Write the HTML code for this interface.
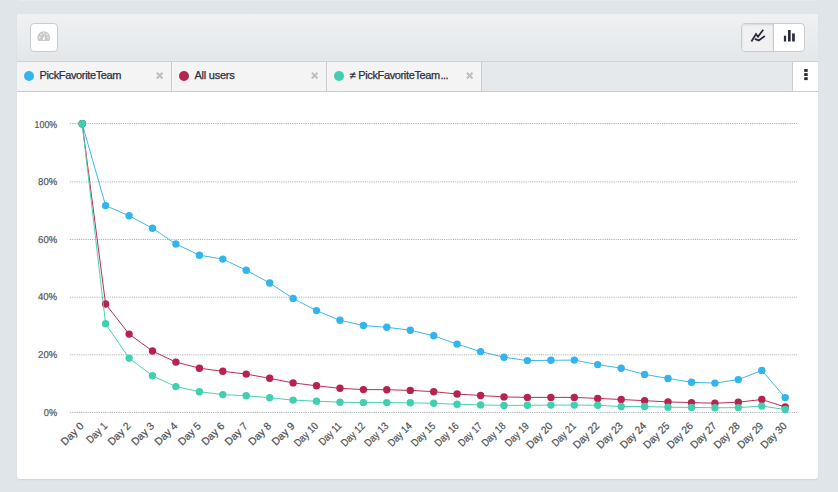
<!DOCTYPE html>
<html><head><meta charset="utf-8">
<style>
html,body{margin:0;padding:0;}
body{width:838px;height:492px;overflow:hidden;background:#e0e5e9;font-family:"Liberation Sans",sans-serif;position:relative;}
.topstrip{position:absolute;left:20px;top:0;width:798px;height:1px;background:#e6eaed;}
.panel{position:absolute;left:17px;top:14px;width:801px;height:465px;background:#fff;border-radius:3px;overflow:hidden;box-shadow:0 1px 1.5px rgba(0,0,0,0.08);}
.head{position:absolute;left:0;top:0;width:801px;height:47px;background:linear-gradient(#eff1f3,#e4e7ea);border-bottom:1px solid #cfd2d5;}
.btn{position:absolute;box-sizing:border-box;background:#fff;border:1px solid #c9cbcd;border-radius:4px;}
.tabs{position:absolute;left:0;top:48px;width:801px;height:29px;background:#e6e9ec;border-bottom:1px solid #c9ccd0;}
.tab{position:absolute;top:0;height:29px;width:154px;background:#f4f4f5;border-right:1px solid #c9ccd0;}
.dot{position:absolute;left:7px;top:9px;width:10px;height:10px;border-radius:50%;}
.tab span{position:absolute;left:22.5px;top:7px;font-size:11px;line-height:13px;color:#2b2d3c;white-space:nowrap;letter-spacing:-0.36px;-webkit-text-stroke:0.25px #2b2d3c;}
.tab svg{position:absolute;left:138.9px;top:9.8px;}
.kebab{position:absolute;left:775px;top:0;width:25px;height:29px;background:#fff;border-left:1px solid #c9ccd0;}
.kebab i{position:absolute;left:11.5px;width:3px;height:3px;background:#2b2d3c;}
.chart{position:absolute;left:0;top:0;}
.yl{text-rendering:geometricPrecision;font-size:10px;fill:#505358;stroke:#505358;stroke-width:0.2px;font-family:"Liberation Sans",sans-serif;}
.xl{text-rendering:geometricPrecision;font-size:10.5px;fill:#4b4e54;stroke:#4b4e54;stroke-width:0.2px;font-family:"Liberation Sans",sans-serif;}
</style></head><body>
<div class="topstrip"></div>
<div class="panel">
  <div class="head"></div>
  <div class="btn" style="left:13px;top:9px;width:28px;height:29px;">
    <svg width="14" height="10.5" viewBox="0 0 14 10.5" style="position:absolute;left:6px;top:7px"><path d="M1.9 10 Q1.2 10 0.9 9.3 A6.4 6.4 0 1 1 12.5 9.3 Q12.2 10 11.5 10 Z" fill="#c9cacc"/><path d="M7.6 4.1 L7.5 8 L6 8 Z" fill="#fff"/><circle cx="6.75" cy="7.9" r="1" fill="#fff"/><circle cx="2.7" cy="6.5" r="0.75" fill="#fff"/><circle cx="4" cy="3.5" r="0.75" fill="#fff"/><circle cx="6.75" cy="2.2" r="0.75" fill="#fff"/><circle cx="9.85" cy="3.5" r="0.75" fill="#fff"/><circle cx="11" cy="6.5" r="0.75" fill="#fff"/></svg>
  </div>
  <div class="btn" style="left:724px;top:9px;width:64px;height:29px;overflow:hidden;">
    <div style="position:absolute;left:0;top:0;width:31px;height:27px;background:#f1f1f3;border-right:1px solid #c9cbcd;box-shadow:inset 0 1px 2px rgba(0,0,0,0.12);"></div>
    <svg width="62" height="27" viewBox="742 24 62 27" style="position:absolute;left:0;top:0">
      <polyline points="751.4,41.4 756,34 758,36.7 763.2,29.8" fill="none" stroke="#2b2d3c" stroke-width="1.8"/>
      <polyline points="754.8,38.8 758.7,40.4 764.8,36" fill="none" stroke="#2b2d3c" stroke-width="1.8"/>
      <rect x="783.9" y="35.7" width="2.2" height="5.8" fill="#2b2d3c"/>
      <rect x="788" y="30" width="2.7" height="11.5" fill="#2b2d3c"/>
      <rect x="792.1" y="33.4" width="2.7" height="8.1" fill="#2b2d3c"/>
    </svg>
  </div>
  <div class="tabs">
    <div class="tab" style="left:0"><div class="dot" style="background:#32b4ec"></div><span>PickFavoriteTeam</span><svg width="7.4" height="7.4" viewBox="0 0 8 8"><path d="M0.9 0.9 L7.1 7.1 M7.1 0.9 L0.9 7.1" stroke="#bcc0c4" stroke-width="2.2"/></svg></div>
    <div class="tab" style="left:155px"><div class="dot" style="background:#b8224e"></div><span style="letter-spacing:-0.24px">All users</span><svg width="7.4" height="7.4" viewBox="0 0 8 8"><path d="M0.9 0.9 L7.1 7.1 M7.1 0.9 L0.9 7.1" stroke="#bcc0c4" stroke-width="2.2"/></svg></div>
    <div class="tab" style="left:310px"><div class="dot" style="background:#40cfb0"></div><span>≠</span><span style="left:31.2px">PickFavoriteTeam</span><span style="left:113.4px;letter-spacing:-0.5px">...</span><svg width="7.4" height="7.4" viewBox="0 0 8 8"><path d="M0.9 0.9 L7.1 7.1 M7.1 0.9 L0.9 7.1" stroke="#bcc0c4" stroke-width="2.2"/></svg></div>
    <div class="kebab"><svg width="25" height="29" viewBox="793 62 25 29" style="position:absolute;left:0;top:0"><rect x="804.2" y="69" width="3.5" height="2.9" fill="#2b2d3c"/><rect x="804.2" y="73.1" width="3.5" height="2.9" fill="#2b2d3c"/><rect x="804.2" y="77.2" width="3.5" height="2.9" fill="#2b2d3c"/></svg></div>
  </div>
</div>
<svg class="chart" width="838" height="492" viewBox="0 0 838 492">
<line x1="70.1" y1="123.5" x2="797" y2="123.5" stroke="#a9adb2" stroke-width="1" stroke-dasharray="1.1 1.1"/>
<line x1="70.1" y1="181.9" x2="797" y2="181.9" stroke="#a9adb2" stroke-width="1" stroke-dasharray="1.1 1.1"/>
<line x1="70.1" y1="239.5" x2="797" y2="239.5" stroke="#a9adb2" stroke-width="1" stroke-dasharray="1.1 1.1"/>
<line x1="70.1" y1="297.2" x2="797" y2="297.2" stroke="#a9adb2" stroke-width="1" stroke-dasharray="1.1 1.1"/>
<line x1="70.1" y1="354.8" x2="797" y2="354.8" stroke="#a9adb2" stroke-width="1" stroke-dasharray="1.1 1.1"/>
<line x1="70.1" y1="412.5" x2="797" y2="412.5" stroke="#a9adb2" stroke-width="1" stroke-dasharray="1.1 1.1"/>
<text x="34.6" y="128.1" textLength="22.6" lengthAdjust="spacingAndGlyphs" class="yl">100%</text>
<text x="38.1" y="185.0" textLength="19.1" lengthAdjust="spacingAndGlyphs" class="yl">80%</text>
<text x="38.1" y="243.0" textLength="19.1" lengthAdjust="spacingAndGlyphs" class="yl">60%</text>
<text x="37.9" y="300.0" textLength="19.3" lengthAdjust="spacingAndGlyphs" class="yl">40%</text>
<text x="38.1" y="358.0" textLength="19.1" lengthAdjust="spacingAndGlyphs" class="yl">20%</text>
<text x="43.8" y="416.1" textLength="13.4" lengthAdjust="spacingAndGlyphs" class="yl">0%</text>
<text transform="translate(84.5 426.6) rotate(-45)" text-anchor="end" class="xl">Day 0</text>
<text transform="translate(107.9 426.6) rotate(-45)" text-anchor="end" class="xl" textLength="24.5" lengthAdjust="spacingAndGlyphs">Day 1</text>
<text transform="translate(131.4 426.6) rotate(-45)" text-anchor="end" class="xl">Day 2</text>
<text transform="translate(154.8 426.6) rotate(-45)" text-anchor="end" class="xl">Day 3</text>
<text transform="translate(178.2 426.6) rotate(-45)" text-anchor="end" class="xl">Day 4</text>
<text transform="translate(201.7 426.6) rotate(-45)" text-anchor="end" class="xl">Day 5</text>
<text transform="translate(225.1 426.6) rotate(-45)" text-anchor="end" class="xl">Day 6</text>
<text transform="translate(248.5 426.6) rotate(-45)" text-anchor="end" class="xl">Day 7</text>
<text transform="translate(272.0 426.6) rotate(-45)" text-anchor="end" class="xl">Day 8</text>
<text transform="translate(295.4 426.6) rotate(-45)" text-anchor="end" class="xl">Day 9</text>
<text transform="translate(318.8 426.6) rotate(-45)" text-anchor="end" class="xl" textLength="29.2" lengthAdjust="spacingAndGlyphs">Day 10</text>
<text transform="translate(342.3 426.6) rotate(-45)" text-anchor="end" class="xl" textLength="27.3" lengthAdjust="spacingAndGlyphs">Day 11</text>
<text transform="translate(365.7 426.6) rotate(-45)" text-anchor="end" class="xl" textLength="29.2" lengthAdjust="spacingAndGlyphs">Day 12</text>
<text transform="translate(389.1 426.6) rotate(-45)" text-anchor="end" class="xl" textLength="29.2" lengthAdjust="spacingAndGlyphs">Day 13</text>
<text transform="translate(412.6 426.6) rotate(-45)" text-anchor="end" class="xl" textLength="29.2" lengthAdjust="spacingAndGlyphs">Day 14</text>
<text transform="translate(436.0 426.6) rotate(-45)" text-anchor="end" class="xl" textLength="29.2" lengthAdjust="spacingAndGlyphs">Day 15</text>
<text transform="translate(459.4 426.6) rotate(-45)" text-anchor="end" class="xl" textLength="29.2" lengthAdjust="spacingAndGlyphs">Day 16</text>
<text transform="translate(482.9 426.6) rotate(-45)" text-anchor="end" class="xl" textLength="29.2" lengthAdjust="spacingAndGlyphs">Day 17</text>
<text transform="translate(506.3 426.6) rotate(-45)" text-anchor="end" class="xl" textLength="29.2" lengthAdjust="spacingAndGlyphs">Day 18</text>
<text transform="translate(529.7 426.6) rotate(-45)" text-anchor="end" class="xl" textLength="29.2" lengthAdjust="spacingAndGlyphs">Day 19</text>
<text transform="translate(553.2 426.6) rotate(-45)" text-anchor="end" class="xl" textLength="32.1" lengthAdjust="spacingAndGlyphs">Day 20</text>
<text transform="translate(576.6 426.6) rotate(-45)" text-anchor="end" class="xl" textLength="29.2" lengthAdjust="spacingAndGlyphs">Day 21</text>
<text transform="translate(600.0 426.6) rotate(-45)" text-anchor="end" class="xl" textLength="32.1" lengthAdjust="spacingAndGlyphs">Day 22</text>
<text transform="translate(623.5 426.6) rotate(-45)" text-anchor="end" class="xl" textLength="32.1" lengthAdjust="spacingAndGlyphs">Day 23</text>
<text transform="translate(646.9 426.6) rotate(-45)" text-anchor="end" class="xl" textLength="32.1" lengthAdjust="spacingAndGlyphs">Day 24</text>
<text transform="translate(670.3 426.6) rotate(-45)" text-anchor="end" class="xl" textLength="32.1" lengthAdjust="spacingAndGlyphs">Day 25</text>
<text transform="translate(693.8 426.6) rotate(-45)" text-anchor="end" class="xl" textLength="32.1" lengthAdjust="spacingAndGlyphs">Day 26</text>
<text transform="translate(717.2 426.6) rotate(-45)" text-anchor="end" class="xl" textLength="32.1" lengthAdjust="spacingAndGlyphs">Day 27</text>
<text transform="translate(740.6 426.6) rotate(-45)" text-anchor="end" class="xl" textLength="32.1" lengthAdjust="spacingAndGlyphs">Day 28</text>
<text transform="translate(764.1 426.6) rotate(-45)" text-anchor="end" class="xl" textLength="32.1" lengthAdjust="spacingAndGlyphs">Day 29</text>
<text transform="translate(787.5 426.6) rotate(-45)" text-anchor="end" class="xl" textLength="32.1" lengthAdjust="spacingAndGlyphs">Day 30</text>
<polyline points="82.2,123.8 105.6,205.6 129.1,215.8 152.5,228.2 175.9,244.0 199.4,255.2 222.8,259.1 246.2,270.2 269.7,283.0 293.1,298.4 316.5,310.6 340.0,320.3 363.4,325.5 386.8,327.3 410.3,330.2 433.7,335.8 457.1,344.1 480.6,351.6 504.0,357.2 527.4,360.6 550.9,360.3 574.3,360.1 597.7,364.6 621.2,368.2 644.6,374.4 668.0,378.4 691.5,382.3 714.9,383.1 738.3,379.6 761.8,370.4 785.2,397.6" fill="none" stroke="#32b4ec" stroke-width="0.95" stroke-linejoin="round"/>
<circle cx="82.2" cy="123.8" r="3.7" fill="#32b4ec"/><circle cx="105.6" cy="205.6" r="3.7" fill="#32b4ec"/><circle cx="129.1" cy="215.8" r="3.7" fill="#32b4ec"/><circle cx="152.5" cy="228.2" r="3.7" fill="#32b4ec"/><circle cx="175.9" cy="244.0" r="3.7" fill="#32b4ec"/><circle cx="199.4" cy="255.2" r="3.7" fill="#32b4ec"/><circle cx="222.8" cy="259.1" r="3.7" fill="#32b4ec"/><circle cx="246.2" cy="270.2" r="3.7" fill="#32b4ec"/><circle cx="269.7" cy="283.0" r="3.7" fill="#32b4ec"/><circle cx="293.1" cy="298.4" r="3.7" fill="#32b4ec"/><circle cx="316.5" cy="310.6" r="3.7" fill="#32b4ec"/><circle cx="340.0" cy="320.3" r="3.7" fill="#32b4ec"/><circle cx="363.4" cy="325.5" r="3.7" fill="#32b4ec"/><circle cx="386.8" cy="327.3" r="3.7" fill="#32b4ec"/><circle cx="410.3" cy="330.2" r="3.7" fill="#32b4ec"/><circle cx="433.7" cy="335.8" r="3.7" fill="#32b4ec"/><circle cx="457.1" cy="344.1" r="3.7" fill="#32b4ec"/><circle cx="480.6" cy="351.6" r="3.7" fill="#32b4ec"/><circle cx="504.0" cy="357.2" r="3.7" fill="#32b4ec"/><circle cx="527.4" cy="360.6" r="3.7" fill="#32b4ec"/><circle cx="550.9" cy="360.3" r="3.7" fill="#32b4ec"/><circle cx="574.3" cy="360.1" r="3.7" fill="#32b4ec"/><circle cx="597.7" cy="364.6" r="3.7" fill="#32b4ec"/><circle cx="621.2" cy="368.2" r="3.7" fill="#32b4ec"/><circle cx="644.6" cy="374.4" r="3.7" fill="#32b4ec"/><circle cx="668.0" cy="378.4" r="3.7" fill="#32b4ec"/><circle cx="691.5" cy="382.3" r="3.7" fill="#32b4ec"/><circle cx="714.9" cy="383.1" r="3.7" fill="#32b4ec"/><circle cx="738.3" cy="379.6" r="3.7" fill="#32b4ec"/><circle cx="761.8" cy="370.4" r="3.7" fill="#32b4ec"/><circle cx="785.2" cy="397.6" r="3.7" fill="#32b4ec"/>
<polyline points="82.2,123.8 105.6,304.0 129.1,334.1 152.5,351.0 175.9,362.1 199.4,368.2 222.8,371.3 246.2,374.1 269.7,378.3 293.1,382.9 316.5,385.8 340.0,388.3 363.4,389.6 386.8,389.7 410.3,390.4 433.7,391.7 457.1,394.0 480.6,395.5 504.0,396.9 527.4,397.4 550.9,397.4 574.3,397.4 597.7,398.4 621.2,399.5 644.6,400.7 668.0,401.9 691.5,402.6 714.9,403.2 738.3,402.2 761.8,399.5 785.2,407.0" fill="none" stroke="#b8224e" stroke-width="0.95" stroke-linejoin="round"/>
<circle cx="82.2" cy="123.8" r="3.7" fill="#b8224e"/><circle cx="105.6" cy="304.0" r="3.7" fill="#b8224e"/><circle cx="129.1" cy="334.1" r="3.7" fill="#b8224e"/><circle cx="152.5" cy="351.0" r="3.7" fill="#b8224e"/><circle cx="175.9" cy="362.1" r="3.7" fill="#b8224e"/><circle cx="199.4" cy="368.2" r="3.7" fill="#b8224e"/><circle cx="222.8" cy="371.3" r="3.7" fill="#b8224e"/><circle cx="246.2" cy="374.1" r="3.7" fill="#b8224e"/><circle cx="269.7" cy="378.3" r="3.7" fill="#b8224e"/><circle cx="293.1" cy="382.9" r="3.7" fill="#b8224e"/><circle cx="316.5" cy="385.8" r="3.7" fill="#b8224e"/><circle cx="340.0" cy="388.3" r="3.7" fill="#b8224e"/><circle cx="363.4" cy="389.6" r="3.7" fill="#b8224e"/><circle cx="386.8" cy="389.7" r="3.7" fill="#b8224e"/><circle cx="410.3" cy="390.4" r="3.7" fill="#b8224e"/><circle cx="433.7" cy="391.7" r="3.7" fill="#b8224e"/><circle cx="457.1" cy="394.0" r="3.7" fill="#b8224e"/><circle cx="480.6" cy="395.5" r="3.7" fill="#b8224e"/><circle cx="504.0" cy="396.9" r="3.7" fill="#b8224e"/><circle cx="527.4" cy="397.4" r="3.7" fill="#b8224e"/><circle cx="550.9" cy="397.4" r="3.7" fill="#b8224e"/><circle cx="574.3" cy="397.4" r="3.7" fill="#b8224e"/><circle cx="597.7" cy="398.4" r="3.7" fill="#b8224e"/><circle cx="621.2" cy="399.5" r="3.7" fill="#b8224e"/><circle cx="644.6" cy="400.7" r="3.7" fill="#b8224e"/><circle cx="668.0" cy="401.9" r="3.7" fill="#b8224e"/><circle cx="691.5" cy="402.6" r="3.7" fill="#b8224e"/><circle cx="714.9" cy="403.2" r="3.7" fill="#b8224e"/><circle cx="738.3" cy="402.2" r="3.7" fill="#b8224e"/><circle cx="761.8" cy="399.5" r="3.7" fill="#b8224e"/><circle cx="785.2" cy="407.0" r="3.7" fill="#b8224e"/>
<polyline points="82.2,123.8 105.6,323.8 129.1,358.1 152.5,375.8 175.9,386.6 199.4,391.7 222.8,394.6 246.2,395.7 269.7,397.8 293.1,400.1 316.5,401.2 340.0,402.2 363.4,402.6 386.8,402.6 410.3,402.8 433.7,403.3 457.1,404.3 480.6,404.9 504.0,405.4 527.4,405.3 550.9,405.1 574.3,405.1 597.7,405.3 621.2,406.5 644.6,406.5 668.0,407.2 691.5,407.4 714.9,407.8 738.3,407.6 761.8,406.1 785.2,409.5" fill="none" stroke="#40cfb0" stroke-width="0.95" stroke-linejoin="round"/>
<circle cx="82.2" cy="123.8" r="3.7" fill="#40cfb0"/><circle cx="105.6" cy="323.8" r="3.7" fill="#40cfb0"/><circle cx="129.1" cy="358.1" r="3.7" fill="#40cfb0"/><circle cx="152.5" cy="375.8" r="3.7" fill="#40cfb0"/><circle cx="175.9" cy="386.6" r="3.7" fill="#40cfb0"/><circle cx="199.4" cy="391.7" r="3.7" fill="#40cfb0"/><circle cx="222.8" cy="394.6" r="3.7" fill="#40cfb0"/><circle cx="246.2" cy="395.7" r="3.7" fill="#40cfb0"/><circle cx="269.7" cy="397.8" r="3.7" fill="#40cfb0"/><circle cx="293.1" cy="400.1" r="3.7" fill="#40cfb0"/><circle cx="316.5" cy="401.2" r="3.7" fill="#40cfb0"/><circle cx="340.0" cy="402.2" r="3.7" fill="#40cfb0"/><circle cx="363.4" cy="402.6" r="3.7" fill="#40cfb0"/><circle cx="386.8" cy="402.6" r="3.7" fill="#40cfb0"/><circle cx="410.3" cy="402.8" r="3.7" fill="#40cfb0"/><circle cx="433.7" cy="403.3" r="3.7" fill="#40cfb0"/><circle cx="457.1" cy="404.3" r="3.7" fill="#40cfb0"/><circle cx="480.6" cy="404.9" r="3.7" fill="#40cfb0"/><circle cx="504.0" cy="405.4" r="3.7" fill="#40cfb0"/><circle cx="527.4" cy="405.3" r="3.7" fill="#40cfb0"/><circle cx="550.9" cy="405.1" r="3.7" fill="#40cfb0"/><circle cx="574.3" cy="405.1" r="3.7" fill="#40cfb0"/><circle cx="597.7" cy="405.3" r="3.7" fill="#40cfb0"/><circle cx="621.2" cy="406.5" r="3.7" fill="#40cfb0"/><circle cx="644.6" cy="406.5" r="3.7" fill="#40cfb0"/><circle cx="668.0" cy="407.2" r="3.7" fill="#40cfb0"/><circle cx="691.5" cy="407.4" r="3.7" fill="#40cfb0"/><circle cx="714.9" cy="407.8" r="3.7" fill="#40cfb0"/><circle cx="738.3" cy="407.6" r="3.7" fill="#40cfb0"/><circle cx="761.8" cy="406.1" r="3.7" fill="#40cfb0"/><circle cx="785.2" cy="409.5" r="3.7" fill="#40cfb0"/>
</svg>
</body></html>
